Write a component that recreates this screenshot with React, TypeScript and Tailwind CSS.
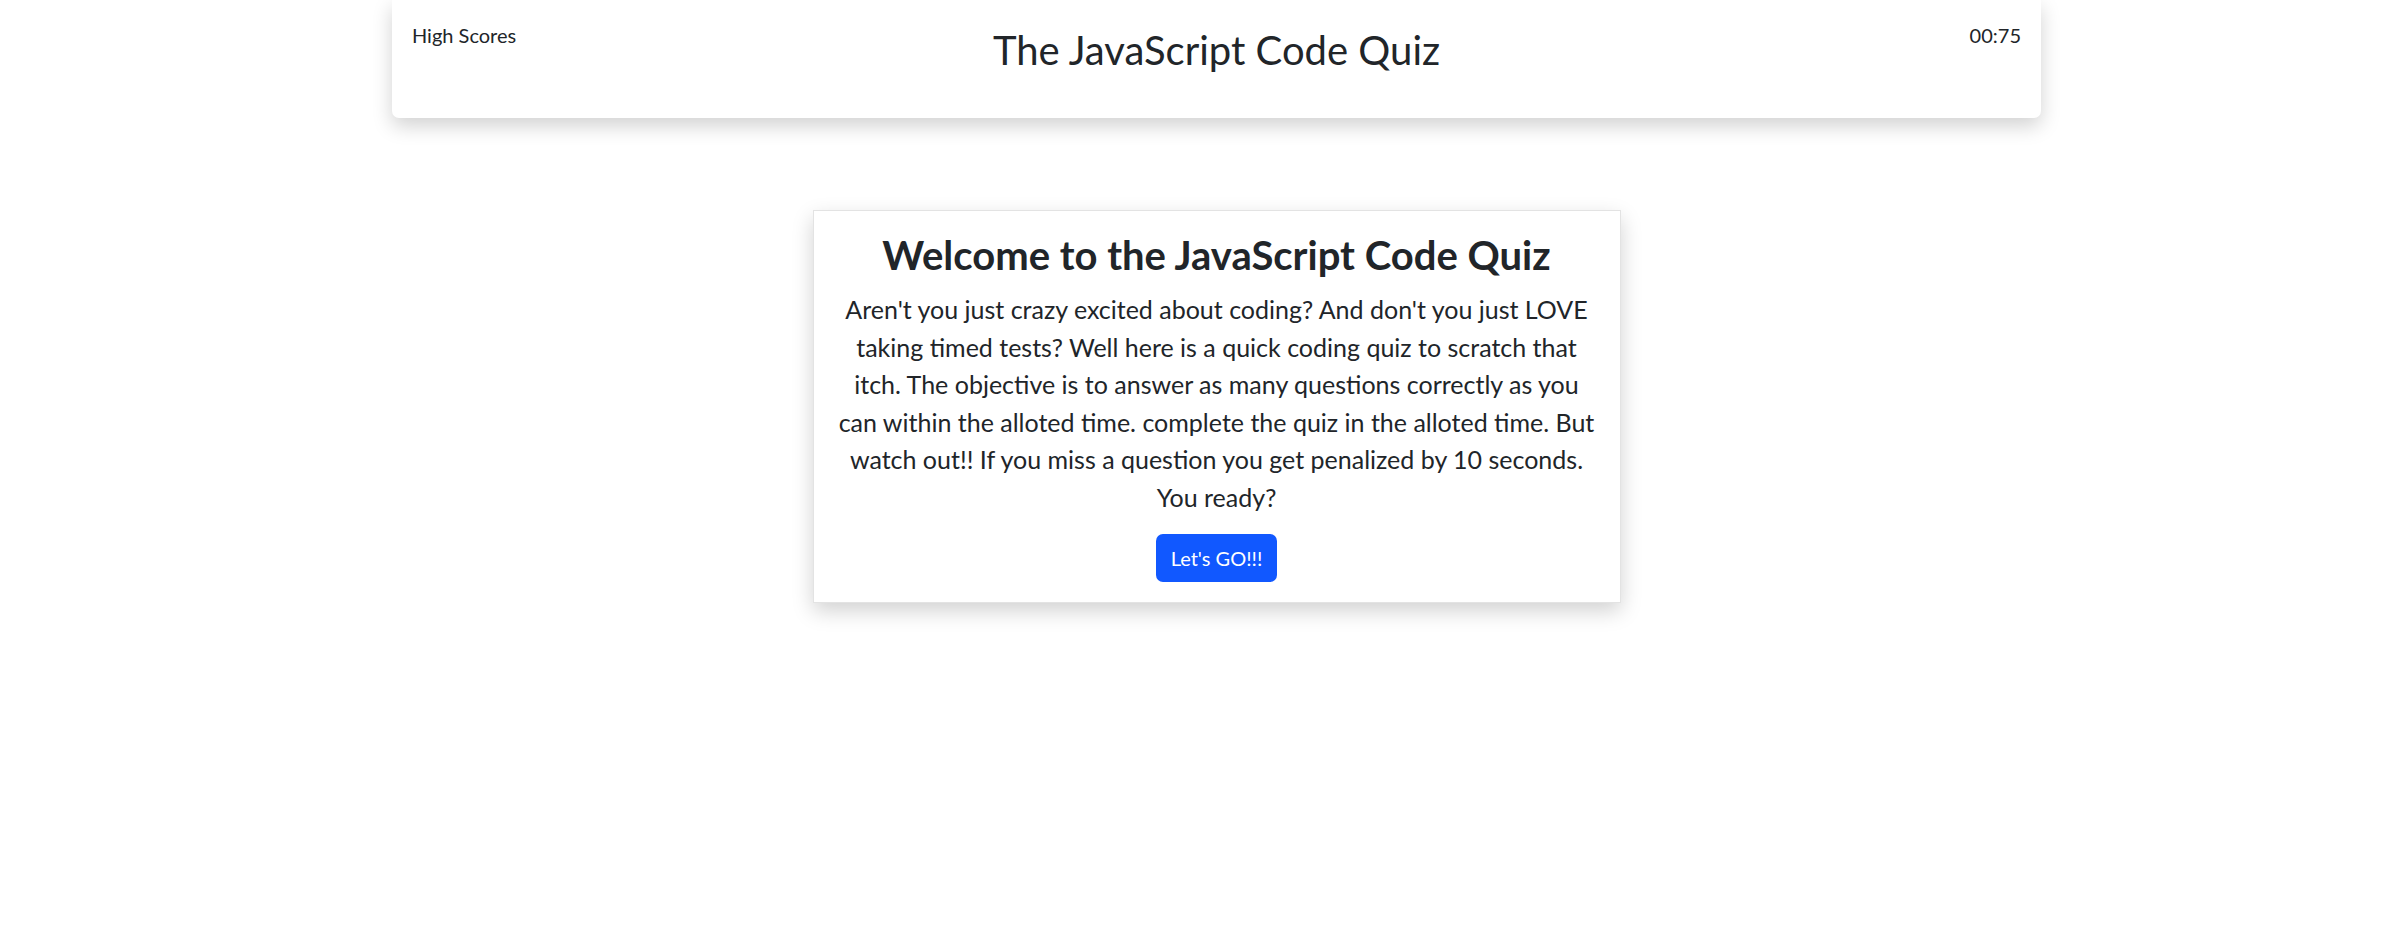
export default function App() {
  const font = { fontFamily: '"Segoe UI", Lato, "Open Sans", sans-serif' };
  return (
    <div className="min-h-[944px] bg-white text-[#212529]" style={font}>
      <div className="ml-[392px] w-[1649px]">
        <header className="flex h-[118px] items-start justify-between rounded-b-[7px] bg-white px-5 pt-5 shadow-[0_8px_20px_rgba(0,0,0,0.18)]">
          <div className="w-[150px] text-[20px] leading-[30px]">High Scores</div>
          <h1 className="mt-[6px] text-[40px] font-normal leading-[48px]">The JavaScript Code Quiz</h1>
          <div className="w-[150px] text-right text-[20px] leading-[30px]">00:75</div>
        </header>
        <main className="mx-auto mt-[92px] w-[808px] border border-[#e3e3e3] bg-white p-5 text-center shadow-[0_8px_20px_rgba(0,0,0,0.18)]">
          <h2 className="mb-[10px] text-[40px] font-bold leading-[48px]">Welcome to the JavaScript Code Quiz</h2>
          <p className="mb-5 pt-[2px] text-[25px] leading-[37.5px]">
            Aren't you just crazy excited about coding? And don't you just LOVE taking timed tests? Well here is a quick coding quiz to scratch that itch. The objective is to answer as many questions correctly as you can within the alloted time. complete the quiz in the alloted time. But watch out!! If you miss a question you get penalized by 10 seconds. You ready?
          </p>
          <button className="-mt-[2px] h-[48px] rounded-[7px] bg-[#1158ff] px-[15px] text-[20px] leading-[30px] text-white">Let's GO!!!</button>
        </main>
      </div>
    </div>
  );
}
